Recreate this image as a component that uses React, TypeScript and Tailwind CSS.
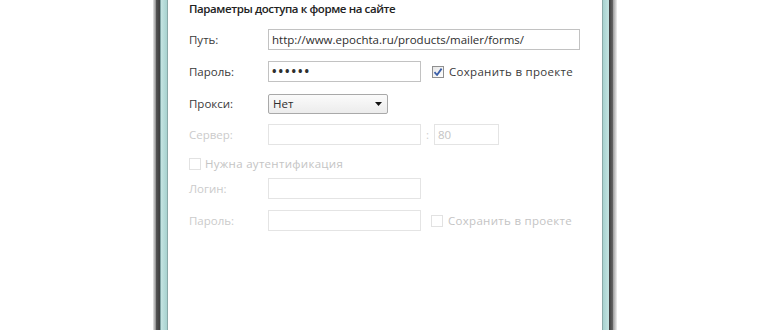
import React from "react";

const font = { fontFamily: '"Open Sans", "Noto Sans", "DejaVu Sans", sans-serif' };

function CheckBox({ checked = false, disabled = false }: { checked?: boolean; disabled?: boolean }) {
  return (
    <span
      className={
        "flex h-[12px] w-[12px] shrink-0 items-center justify-center border " +
        (disabled ? "border-[#e2e2e2] bg-white" : "border-[#8f8f8f] bg-gradient-to-br from-[#e6e6e6] to-[#ffffff]")
      }
    >
      {checked && (
        <svg width="10" height="10" viewBox="0 0 10 10">
          <path d="M1.5 5.2 L4 8 L8.6 1.6" fill="none" stroke="#3b5fa8" strokeWidth="1.8" strokeLinejoin="round" />
        </svg>
      )}
    </span>
  );
}

function Field({ width, value, disabled = false, bold = false }: { width: string; value?: string; disabled?: boolean; bold?: boolean }) {
  return (
    <div
      className={
        "flex h-[21px] items-center border px-[3px] " +
        width +
        (disabled ? " border-[#e4e4e4] text-[#c4c4c4]" : " border-[#c2c2c2] text-[#2e2e2e]") +
        (bold ? " font-bold tracking-[2px] text-[12px]" : "")
      }
    >
      {value}
    </div>
  );
}

function Label({ text, disabled = false }: { text: string; disabled?: boolean }) {
  return <span className={"w-[79px] shrink-0 " + (disabled ? "text-[#cbcbcb]" : "text-[#3a3a3a]")}>{text}</span>;
}

export default function App() {
  return (
    <div className="flex h-[330px] w-[770px] overflow-hidden bg-white text-[11.5px]" style={font}>
      <div className="w-[153px] shrink-0" />
      {/* left window border */}
      <div className="w-[3px] bg-gradient-to-r from-[#e8e8e8] to-[#8a8a8a]" />
      <div className="w-[4px] bg-gradient-to-r from-[#555555] to-[#3c3c3c]" />
      <div className="w-[1px] bg-[#7fa3a3]" />
      <div className="w-[6px] bg-gradient-to-r from-[#c5e4e2] to-[#a7d2cf]" />
      <div className="w-[1px] bg-[#8aa9a8]" />

      <div className="flex w-[434px] shrink-0 flex-col pl-[21px]">
        <div className="h-[29px] font-semibold tracking-[-0.4px] text-[#222]">Параметры доступа к форме на сайте</div>

        <div className="flex h-[21px] items-center">
          <Label text="Путь:" />
          <Field width="w-[312px]" value="http://www.epochta.ru/products/mailer/forms/" />
        </div>

        <div className="mt-[11px] flex h-[21px] items-center">
          <Label text="Пароль:" />
          <Field width="w-[153px]" value="••••••" bold />
          <span className="ml-[11px] flex items-center gap-[5px] tracking-[0.3px] text-[#3a3a3a]">
            <CheckBox checked />
            Сохранить в проекте
          </span>
        </div>

        <div className="mt-[11px] flex h-[21px] items-center">
          <Label text="Прокси:" />
          <div className="flex h-[20px] w-[120px] items-center justify-between rounded-[2px] border border-[#a9a9a9] bg-gradient-to-b from-[#fbfbfb] to-[#ececec] pl-[4px] pr-[5px] text-[#2e2e2e]">
            Нет
            <svg width="7" height="4" viewBox="0 0 7 4">
              <path d="M0 0 H7 L3.5 4 Z" fill="#111" />
            </svg>
          </div>
        </div>

        <div className="mt-[10px] flex h-[21px] items-center">
          <Label text="Сервер:" disabled />
          <Field width="w-[153px]" disabled />
          <span className="mx-[5px] text-[#cfcfcf]">:</span>
          <Field width="w-[65px]" value="80" disabled />
        </div>

        <div className="mt-[8px] flex h-[21px] items-center gap-[4px] tracking-[0.3px] text-[#c4c4c4]">
          <CheckBox disabled />
          Нужна аутентификация
        </div>

        <div className="mt-[4px] flex h-[21px] items-center">
          <Label text="Логин:" disabled />
          <Field width="w-[153px]" disabled />
        </div>

        <div className="mt-[11px] flex h-[21px] items-center">
          <Label text="Пароль:" disabled />
          <Field width="w-[153px]" disabled />
          <span className="ml-[10px] flex items-center gap-[5px] tracking-[0.3px] text-[#c4c4c4]">
            <CheckBox disabled />
            Сохранить в проекте
          </span>
        </div>
      </div>

      {/* right window border */}
      <div className="w-[1px] bg-[#8aa9a8]" />
      <div className="w-[6px] bg-gradient-to-r from-[#a7d2cf] to-[#c5e4e2]" />
      <div className="w-[4px] bg-gradient-to-r from-[#3c3c3c] to-[#666666]" />
      <div className="w-[4px] bg-gradient-to-r from-[#9a9a9a] to-[#f0f0f0]" />
      <div className="flex-1" />
    </div>
  );
}
